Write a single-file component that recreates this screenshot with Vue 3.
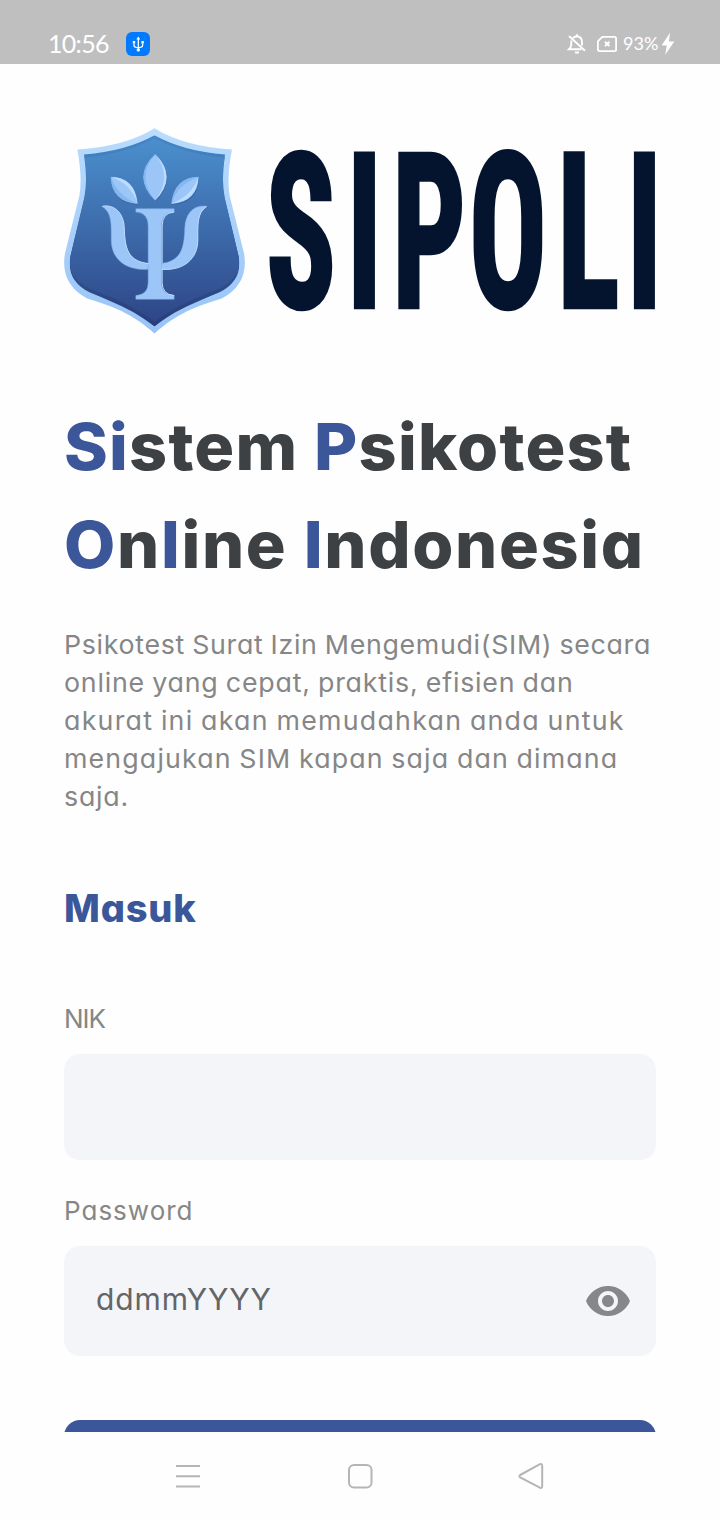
<script setup>
const heading = [
  [['Si', true], ['stem ', false], ['P', true], ['sikotest', false]],
  [['O', true], ['n', false], ['l', true], ['ine ', false], ['I', true], ['ndonesia', false]],
]
const intro = [
  { text: 'Psikotest Surat Izin Mengemudi(SIM) secara', cls: 'snug' },
  { text: 'online yang cepat, praktis, efisien dan', cls: 'even' },
  { text: 'akurat ini akan memudahkan anda untuk', cls: 'loose' },
  { text: 'mengajukan SIM kapan saja dan dimana', cls: 'wide' },
  { text: 'saja.', cls: 'even' },
]
const letterCenters = [301, 364.5, 429, 508, 588.5, 644.5]
const letterX = letterCenters.map(v => (v / 0.6).toFixed(1)).join(' ')
</script>

<template>
  <div class="screen">
    <header class="status">
      <div class="status-left">
        <span class="clock">10:56</span>
        <span class="usb">
          <svg width="24" height="24" viewBox="0 0 24 24" fill="none" stroke="#fff" stroke-width="1.3">
            <path d="M12.3 6.5V18M8 11.5v2q0 2 4.3 2.2q4.3-.2 4.3-2.2v-2" />
            <path d="M12.3 4.6l2 3h-4zM6.8 9h2.4v2.4H6.8zM15.4 9h2.4v2.4h-2.4z" fill="#fff" stroke="none" />
            <circle cx="12.3" cy="17.9" r="1.7" fill="#fff" stroke="none" />
          </svg>
        </span>
      </div>
      <div class="status-right">
        <svg class="bell" width="20" height="22" viewBox="0 0 20 22" fill="none" stroke="#fff" stroke-width="1.9">
          <path d="M6 5.2Q7.400 3.200 10 3.200Q15 3.800 15 9v3.500M4.500 7.500Q4.200 9 4.200 12Q4 14.500 2 16.200H14.500" />
          <path d="M2 3L18 17.800" />
          <path d="M10 1.200v2" /><path d="M8 19.500h4" stroke-width="2" />
        </svg>
        <svg class="sim" width="20" height="16" viewBox="0 0 20 16" fill="none" stroke="#fff" stroke-width="1.8">
          <path d="M5.300 .9H17.500Q19.100 .9 19.100 2.500V13.500Q19.100 15.100 17.500 15.100H2.500Q.9 15.100 .9 13.500V5.300Z" />
          <path d="M8 5.700l4.400 4.400M12.400 5.700L8 10.100" stroke-width="2" />
        </svg>
        <span class="battery">93%</span>
        <svg class="bolt" width="14" height="24" viewBox="0 0 14 24"><path d="M9 .8L.6 13.400H5.800L4.200 22.800L13.300 9.400H7.900Z" fill="#fff" /></svg>
      </div>
    </header>

    <main class="page">
      <div class="brand">
        <svg class="shield" width="181" height="206" viewBox="24 24 544 618">
          <defs>
            <linearGradient id="rim" x1="0" y1="0" x2="0" y2="1"><stop offset="0" stop-color="#b9dcff" /><stop offset="1" stop-color="#98c4f6" /></linearGradient>
            <linearGradient id="face" x1="0" y1="0" x2="0" y2="1"><stop offset="0" stop-color="#4b8fce" /><stop offset="1" stop-color="#2e4687" /></linearGradient>
            <linearGradient id="edge" x1="0" y1="0" x2="0" y2="1"><stop offset="0" stop-color="#4687c7" /><stop offset="1" stop-color="#263c77" /></linearGradient>
            <clipPath id="inner"><path d="M296 45Q382 93 508 103Q496 178 507 233L549 410Q562 482 490 518C420 548 365 566 296 620C227 566 172 548 102 518Q30 482 43 410L85 233Q96 178 84 103Q210 93 296 45Z" /></clipPath>
          </defs>
          <path fill="url(#rim)" d="M296 24Q382 78 529 88Q512 175 522 228L565 400Q581 492 498 536C420 560 365 580 296 641C227 580 172 560 94 536Q11 492 27 400L70 228Q80 175 64 88Q210 78 296 24Z" />
          <g clip-path="url(#inner)">
            <path fill="url(#edge)" d="M20 40H570V630H20Z" />
            <path fill="url(#face)" d="M296 55Q390 103 508 112Q496 178 507 233L550 405Q562 472 490 506C420 536 365 554 296 606C227 554 172 536 102 506Q30 472 43 405L85 233Q96 178 86 112Q202 103 296 55Z" />
          </g>
          <g fill="#1d3f7d" opacity=".28" transform="translate(2 4)">
            <path d="M298 102Q366 170 298 241Q228 170 298 102Z" /><path d="M165 171Q236 172 245 251Q169 246 165 171Z" /><path d="M428 171Q357 172 347 251Q424 246 428 171Z" />
          </g>
          <g fill="#9bc6f7" stroke="#7dafe8" stroke-width="1.500">
            <path d="M298 102Q366 170 298 241Q228 170 298 102Z" />
            <path d="M165 171Q236 172 245 251Q169 246 165 171Z" />
            <path d="M428 171Q357 172 347 251Q424 246 428 171Z" />
            <path d="M139 259C176 252 204 280 205 325C207 386 216 424 278 431L278 448C205 453 166 414 166 360C166 315 169 278 139 259Z" />
            <path d="M453 259C416 252 388 280 387 325C385 386 376 424 314 431L314 448C387 453 426 414 426 360C426 315 423 278 453 259Z" />
            <path d="M240 266H355V276Q317 278 317 318V488Q317 524 355 527V538H240V527Q277 524 277 488V318Q277 278 240 276Z" />
          </g>
          <g fill="#bddcff">
            <path d="M298 102Q366 170 298 241Q352 170 298 102Z" /><path d="M165 171Q236 172 245 251Q225 190 165 171Z" /><path d="M428 171Q424 246 347 251Q408 228 428 171Z" />
          </g>
          <path d="M139 259C176 252 204 280 205 325C207 386 216 424 278 431M317 448C387 453 426 414 426 360C426 315 423 278 453 259M355 276Q319 278 319 318V430M319 448V488Q319 524 355 527" fill="none" stroke="#c1dfff" stroke-width="3" />
          <path d="M298 102Q228 170 298 241Q240 170 298 102ZM165 171Q169 246 245 251Q185 228 165 171ZM428 171Q357 172 347 251Q366 192 428 171Z" fill="#86b7ee" />
        </svg>
        <svg class="wordmark" width="392" height="180" viewBox="266 140 392 180">
          <text class="word" transform="scale(.6 1)" y="307" :x="letterX">SIPOLI</text>
        </svg>
      </div>

      <h1>
        <span v-for="(line, i) in heading" :key="i" class="h-line"><span v-for="([t, on], j) in line" :key="j" :class="{ accent: on }">{{ t }}</span></span>
      </h1>

      <p class="intro"><span v-for="l in intro" :key="l.text" :class="l.cls">{{ l.text }}</span></p>

      <h2>Masuk</h2>

      <label class="label nik">NIK</label>
      <div class="field first"></div>
      <label class="label pass">Password</label>
      <div class="field second">
        <span class="hint">ddmmYYYY</span>
        <svg width="48" height="48" viewBox="0 0 24 24" fill="#868789"><path d="M12 4.500C7 4.500 2.730 7.610 1 12c1.730 4.390 6 7.500 11 7.500s9.270-3.110 11-7.500c-1.730-4.390-6-7.500-11-7.500zM12 17c-2.760 0-5-2.240-5-5s2.240-5 5-5 5 2.240 5 5-2.240 5-5 5zm0-8c-1.660 0-3 1.340-3 3s1.340 3 3 3 3-1.340 3-3-1.340-3-3-3z" /></svg>
      </div>
      <div class="submit"></div>
    </main>

    <nav class="nav">
      <svg width="28" height="28" viewBox="0 0 28 28"><path d="M2 4H26M2 14.200H26M2 24.400H26" /></svg>
      <svg width="28" height="28" viewBox="0 0 28 28"><rect x="3" y="3" width="22.500" height="22.500" rx="5" /></svg>
      <svg width="28" height="28" viewBox="0 0 28 28"><path d="M2.200 13L21.900 2.200Q24.200 1.500 24.200 3.900V24Q24.200 26.600 21.900 25.700L2.200 15.400Q.5 14.200 2.200 13Z" /></svg>
    </nav>
  </div>
</template>

<style>
body { background: #fff; }
</style>

<style scoped>
.screen { width: 720px; height: 1520px; display: flex; flex-direction: column; overflow: hidden; background: #fefefe; font-family: Inter, "Open Sans", sans-serif; font-feature-settings: "cv11" 1; }
.status { box-sizing: border-box; height: 64px; flex: none; padding: 24px 45px 0 48px; background: #bfbfbf; display: flex; justify-content: space-between; color: #fff; }
.status-left, .status-right { display: flex; align-items: center; height: 40px; }
.clock { width: 78px; font: 400 25px/38px Lato, sans-serif; letter-spacing: -.7px; margin-top: -2px; }
.usb { width: 24px; height: 24px; border-radius: 6px; background: #007aff; }
.usb svg { display: block; }
.sim { margin-left: 10px; }
.battery { width: 37px; margin-left: 6px; font: 400 18px/38px Lato, sans-serif; white-space: nowrap; margin-top: -2px; }
.bolt { margin-left: 1px; }
.page { height: 1368px; flex: none; overflow: hidden; box-sizing: border-box; padding: 64px 64px 0; display: flex; flex-direction: column; }
.brand { display: flex; height: 206px; flex: none; }
.shield { flex: none; }
.wordmark { flex: none; margin: 12px -2px 0 21px; overflow: visible; }
.word { font-family: "Roboto Condensed", Roboto, sans-serif; font-weight: 700; font-size: 215px; text-anchor: middle; fill: #04142e; stroke: #04142e; stroke-width: 4.500px; }
h1 { margin: 64px 0 0; font-size: 65px; line-height: 98px; font-weight: 800; letter-spacing: 1.200px; color: #3d4144; transform: scaleX(1.022); transform-origin: left; }
.h-line { display: block; white-space: pre; }
.h-line + .h-line { letter-spacing: 1.650px; }
.accent { color: #3b5799; }
.intro { margin: 32px 0 0; font-size: 26px; line-height: 38px; color: #868686; transform: scaleX(1.03); transform-origin: left; }
.intro span { display: block; white-space: nowrap; word-spacing: -1px; }
.snug { letter-spacing: .660px; }
.even { letter-spacing: .760px; }
.loose { letter-spacing: 1.200px; }
.wide { letter-spacing: 1.100px; }
h2 { margin: 64px 0 0; font-size: 38px; line-height: 56px; letter-spacing: .800px; font-weight: 800; color: #3b5799; }
.label { font-size: 26px; line-height: 38px; color: #868686; }
.nik { margin-top: 64px; letter-spacing: -1px; }
.pass { margin-top: 32px; letter-spacing: 1px; }
.field { flex: none; margin-top: 16px; border-radius: 16px; background: #f3f5f9; box-sizing: border-box; }
.first { height: 106px; }
.second { height: 110px; display: flex; align-items: center; justify-content: space-between; padding: 0 24px 0 32px; }
.hint { font-size: 30px; line-height: 40px; letter-spacing: .900px; color: #646567; margin-top: -5px; font-weight: 370; }
.submit { flex: none; height: 108px; margin-top: 64px; border-radius: 16px; background: #3b5799; }
.nav { height: 88px; flex: none; background: #fefefe; display: flex; justify-content: space-between; align-items: center; padding: 0 174px; }
.nav svg { fill: none; stroke: #b5b5b5; stroke-width: 2; }
</style>
